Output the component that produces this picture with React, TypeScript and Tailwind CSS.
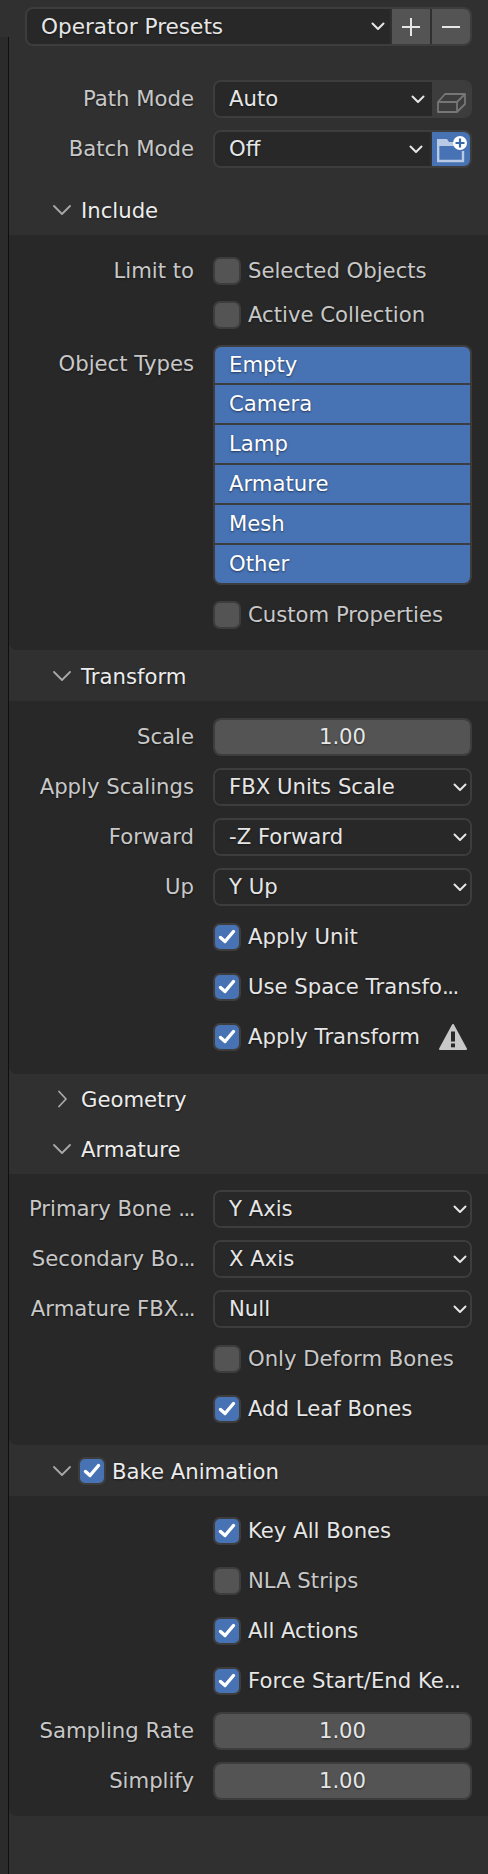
import React from "react";

const textShadow = "[text-shadow:0_1px_2px_rgba(0,0,0,0.5)]";

function Dots() {
  return <span className="tracking-[-1.5px]">...</span>;
}

function Chevron({ className = "" }: { className?: string }) {
  return (
    <svg width="14" height="9" viewBox="0 0 14 9" className={className} fill="none">
      <path d="M1.5 1.5 L7 7 L12.5 1.5" stroke="#e6e6e6" strokeWidth="2" strokeLinecap="round" strokeLinejoin="round" />
    </svg>
  );
}

function Label({ text }: { text?: React.ReactNode }) {
  return (
    <div className={`w-[185px] shrink-0 text-right text-[#c8c8c8] whitespace-nowrap ${textShadow}`}>{text ?? ""}</div>
  );
}

function Dropdown({ value, attached }: { value: string; attached?: boolean }) {
  return (
    <div className={`flex-1 h-full bg-[#282828] flex items-center pl-[14px] text-[#e6e6e6] ${attached ? "pr-[7px]" : "pr-[3px]"} ${textShadow}`}>
      <span className="flex-1">{value}</span>
      <Chevron />
    </div>
  );
}

function Field({ children }: { children: React.ReactNode }) {
  return (
    <div className="w-[259px] h-[38px] rounded-[8px] border-2 border-[#3d3d3d] overflow-hidden flex shrink-0 box-border">
      {children}
    </div>
  );
}

function DropRow({ label, value, cls = "" }: { label: React.ReactNode; value: string; cls?: string }) {
  return (
    <div className={`flex items-center gap-[19px] h-[38px] ${cls}`}>
      <Label text={label} />
      <Field>
        <Dropdown value={value} />
      </Field>
    </div>
  );
}

function NumRow({ label, cls = "" }: { label: string; cls?: string }) {
  return (
    <div className={`flex items-center gap-[19px] h-[38px] ${cls}`}>
      <Label text={label} />
      <Field>
        <div className={`flex-1 bg-[#545454] flex items-center justify-center text-[#e6e6e6] ${textShadow}`}>1.00</div>
      </Field>
    </div>
  );
}

function Box({ on }: { on: boolean }) {
  return (
    <div className={`w-[28px] h-[28px] rounded-[7px] border-2 border-[#3d3d3d] shrink-0 box-border flex items-center justify-center ${on ? "bg-[#4772b3]" : "bg-[#545454]"}`}>
      {on && (
        <svg width="20" height="18" viewBox="0 0 20 18" fill="none">
          <path d="M3.5 9.5 L8 13.5 L16.5 3.5" stroke="#ffffff" strokeWidth="3.4" strokeLinecap="round" strokeLinejoin="round" />
        </svg>
      )}
    </div>
  );
}

function CheckRow({ text, on, label, cls = "", warn }: { text: React.ReactNode; on: boolean; label?: string; cls?: string; warn?: boolean }) {
  return (
    <div className={`flex items-center gap-[19px] h-[28px] ${cls}`}>
      <Label text={label} />
      <div className="w-[259px] flex items-center gap-[7px] shrink-0">
        <Box on={on} />
        <span className={`${on ? "text-[#e6e6e6]" : "text-[#c8c8c8]"} whitespace-nowrap flex-1 ${textShadow}`}>{text}</span>
        {warn && (
          <svg width="28" height="28" viewBox="0 0 28 28" className="mr-[5px]">
            <path d="M14 2 L27 26 L1 26 Z" fill="#c8c8c8" stroke="#c8c8c8" strokeWidth="2" strokeLinejoin="round" />
            <rect x="12" y="8.5" width="4" height="10" fill="#282828" />
            <rect x="12" y="20.5" width="4" height="3.8" fill="#282828" />
          </svg>
        )}
      </div>
    </div>
  );
}

function Header({ text, closed, check }: { text: string; closed?: boolean; check?: boolean }) {
  return (
    <div className={`h-[50px] flex items-center pl-[44px] text-[#ececec] ${textShadow}`}>
      <svg width="18" height="18" viewBox="0 0 18 18" fill="none" className="shrink-0">
        {closed ? (
          <path d="M6 1.5 L13 9 L6 16.5" stroke="#a8a8a8" strokeWidth="1.8" strokeLinecap="round" strokeLinejoin="round" />
        ) : (
          <path d="M1 5 L9 13 L17 5" stroke="#a8a8a8" strokeWidth="1.8" strokeLinecap="round" strokeLinejoin="round" />
        )}
      </svg>
      {check ? (
        <div className="ml-[7px] mr-[6px]"><Box on /></div>
      ) : (
        <div className="w-[10px]" />
      )}
      <span className="pt-[2px]">{text}</span>
    </div>
  );
}

function Panel({ children, cls = "" }: { children: React.ReactNode; cls?: string }) {
  return <div className={`bg-[#282828] rounded-bl-[8px] ${cls}`}>{children}</div>;
}

const items = ["Empty", "Camera", "Lamp", "Armature", "Mesh", "Other"];

export default function App() {
  return (
    <div
      className="w-[488px] h-[1874px] bg-[#303030] flex overflow-hidden text-[21.2px] leading-[26px]"
      style={{ fontFamily: '"DejaVu Sans", sans-serif' }}
    >
      <div className="w-[9px] shrink-0 flex flex-col">
        <div className="h-[37px]" />
        <div className="flex-1 bg-[#2b2b2b] border-r border-[#0f0f0f]" />
      </div>
      <div className="flex-1 min-w-0">
        <div className="pt-[7px] pl-[16px]">
          <div className="w-[447px] h-[39px] rounded-[8px] border-2 border-[#3d3d3d] overflow-hidden flex box-border">
            <div className={`flex-1 bg-[#282828] flex items-center pl-[14px] pr-[5px] text-[21.6px] text-[#e6e6e6] ${textShadow}`}>
              <span className="flex-1">Operator Presets</span>
              <Chevron />
            </div>
            <div className="w-[38px] ml-[2px] bg-[#545454] flex items-center justify-center">
              <svg width="20" height="20" viewBox="0 0 20 20"><path d="M10 1 V19 M1 10 H19" stroke="#e6e6e6" strokeWidth="2" /></svg>
            </div>
            <div className="w-[38px] ml-[2px] bg-[#545454] flex items-center justify-center">
              <svg width="20" height="20" viewBox="0 0 20 20"><path d="M1 10 H19" stroke="#e6e6e6" strokeWidth="2" /></svg>
            </div>
          </div>
        </div>
        <div className="mt-[34px] flex items-center gap-[19px] h-[38px]">
          <Label text="Path Mode" />
          <Field>
            <Dropdown value="Auto" attached />
            <div className="w-[38px] bg-[#3d3d3d] flex items-center justify-center">
              <svg width="30" height="30" viewBox="0 0 30 30" fill="none">
                <path d="M2 18 H21 V28 H2 Z M2 18 L9 10 H29 L21 18 M29 10 V20 L21 28" stroke="#767676" strokeWidth="1.8" strokeLinejoin="round" />
              </svg>
            </div>
          </Field>
        </div>
        <div className="mt-[12px] flex items-center gap-[19px] h-[38px]">
          <Label text="Batch Mode" />
          <Field>
            <Dropdown value="Off" attached />
            <div className="w-[38px] ml-[2px] bg-[#4772b3] flex items-center justify-center">
              <svg width="34" height="34" viewBox="0 0 34 34" fill="none">
                <path d="M3 7 H13 L15 10 H20 V14 H3 Z" fill="#b8cae4" />
                <path d="M4.2 14 V29 H29 V19" stroke="#b8cae4" strokeWidth="2.4" fill="none" />
                <circle cx="26" cy="11" r="7" fill="#ffffff" />
                <path d="M26 6.5 V15.5 M21.5 11 H30.5" stroke="#3a68ad" strokeWidth="2.2" />
              </svg>
            </div>
          </Field>
        </div>
        <div className="mt-[17px]"><Header text="Include" /></div>
        <Panel cls="pt-[22px] pb-[21px]">
          <CheckRow label="Limit to" text="Selected Objects" on={false} />
          <CheckRow text="Active Collection" on={false} cls="mt-[16px]" />
          <div className="mt-[16px] flex gap-[19px]">
            <div className="pt-[6px]"><Label text="Object Types" /></div>
            <div className="w-[259px] rounded-[8px] border-2 border-[#3d3d3d] overflow-hidden bg-[#3d3d3d] flex flex-col gap-[2px] box-border">
              {items.map((t) => (
                <div key={t} className={`h-[38px] first:h-[36px] bg-[#4772b3] flex items-center pl-[14px] text-[#ffffff] ${textShadow}`}>{t}</div>
              ))}
            </div>
          </div>
          <CheckRow text="Custom Properties" on={false} cls="mt-[16px]" />
        </Panel>
        <div className="h-[51px] flex flex-col justify-center"><Header text="Transform" /></div>
        <Panel cls="pt-[17px] pb-[23px]">
          <NumRow label="Scale" />
          <DropRow label="Apply Scalings" value="FBX Units Scale" cls="mt-[12px]" />
          <DropRow label="Forward" value="-Z Forward" cls="mt-[12px]" />
          <DropRow label="Up" value="Y Up" cls="mt-[12px]" />
          <CheckRow text="Apply Unit" on cls="mt-[17px]" />
          <CheckRow text={<>Use Space Transfo<Dots /></>} on cls="mt-[22px]" />
          <CheckRow text="Apply Transform" on warn cls="mt-[22px]" />
        </Panel>
        <Header text="Geometry" closed />
        <Header text="Armature" />
        <Panel cls="pt-[16px] pb-[22px]">
          <DropRow label={<>Primary Bone <Dots /></>} value="Y Axis" />
          <DropRow label={<>Secondary Bo<Dots /></>} value="X Axis" cls="mt-[12px]" />
          <DropRow label={<>Armature FBX<Dots /></>} value="Null" cls="mt-[12px]" />
          <CheckRow text="Only Deform Bones" on={false} cls="mt-[17px]" />
          <CheckRow text="Add Leaf Bones" on cls="mt-[22px]" />
        </Panel>
        <div className="h-[51px] flex flex-col justify-center"><Header text="Bake Animation" check /></div>
        <Panel cls="pt-[21px] pb-[16px]">
          <CheckRow text="Key All Bones" on />
          <CheckRow text="NLA Strips" on={false} cls="mt-[22px]" />
          <CheckRow text="All Actions" on cls="mt-[22px]" />
          <CheckRow text={<>Force Start/End Ke<Dots /></>} on cls="mt-[22px]" />
          <NumRow label="Sampling Rate" cls="mt-[17px]" />
          <NumRow label="Simplify" cls="mt-[12px]" />
        </Panel>
      </div>
    </div>
  );
}
